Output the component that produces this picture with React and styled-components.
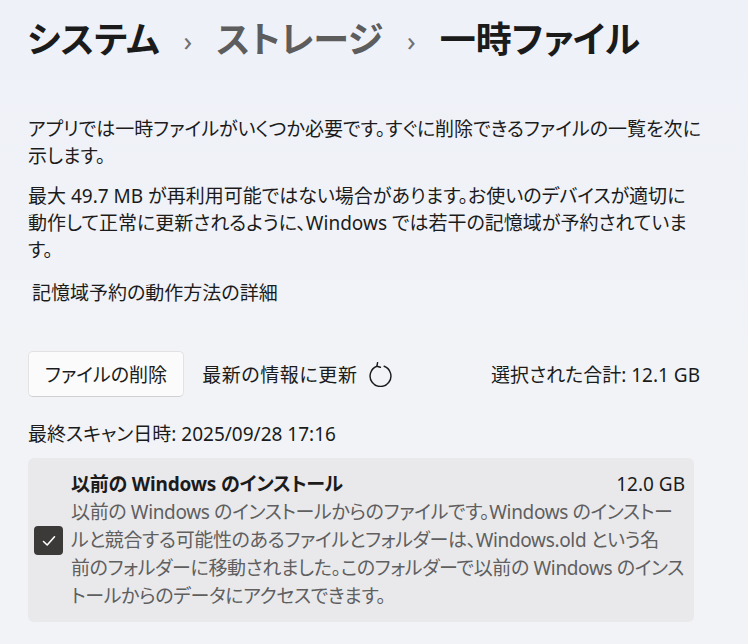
import React from "react";
import styled, { createGlobalStyle } from "styled-components";

const GlobalStyle = createGlobalStyle`
  html, body {
    margin: 0;
    padding: 0;
  }
  body {
    width: 748px;
    height: 644px;
    overflow: hidden;
    background: linear-gradient(180deg, #eef1f8 0%, #f1f3f7 55%, #f2f3f6 100%);
    font-family: "Noto Sans", "Noto Sans CJK JP", sans-serif;
    font-feature-settings: "palt";
    color: #1b1b1b;
  }
`;

const Page = styled.main`
  padding: 12px 0 0 28px;
  width: 672px;
`;

const Breadcrumb = styled.h1`
  display: flex;
  align-items: center;
  gap: 24px;
  margin: 0 0 48px -1px;
  font-size: 36px;
  font-weight: 600;
  line-height: 56px;
`;

const Crumb = styled.span`
  color: ${(p) => (p.$muted ? "#5d5d5d" : "#1b1b1b")};
`;

const Sep = styled.span`
  font-size: 28px;
  font-weight: 400;
  color: #707070;
`;

const Para = styled.p`
  margin: 0 0 13px;
  font-size: 19px;
  line-height: 27px;
  white-space: nowrap;
`;

const LinkText = styled.a`
  display: block;
  margin: 16px 0 0 4px;
  font-size: 19px;
  line-height: 27px;
  color: #1b1b1b;
  text-decoration: none;
`;

const Toolbar = styled.div`
  display: flex;
  align-items: center;
  margin-top: 44px;
`;

const Button = styled.button`
  height: 46px;
  padding: 0 16px;
  border: 1px solid #e2e2e4;
  border-bottom-color: #d0d0d3;
  border-radius: 5px;
  background: #fbfbfc;
  font-family: inherit;
  font-feature-settings: inherit;
  font-size: 19px;
  color: #1b1b1b;
`;

const Refresh = styled.button`
  display: flex;
  align-items: center;
  gap: 10px;
  margin-left: 18px;
  padding: 0;
  border: none;
  background: none;
  font-family: inherit;
  font-feature-settings: inherit;
  font-size: 19px;
  letter-spacing: 0.6px;
  color: #1b1b1b;
`;

const Total = styled.span`
  margin-left: auto;
  font-size: 19px;
`;

const ScanInfo = styled.div`
  margin-top: 24px;
  font-size: 19px;
  line-height: 27px;
`;

const Card = styled.div`
  display: grid;
  grid-template-columns: 30px 1fr auto;
  column-gap: 7px;
  align-items: center;
  margin-top: 10px;
  width: 666px;
  box-sizing: border-box;
  padding: 13px 9px 12px 6px;
  background: #e9e9ec;
  border-radius: 6px;
`;

const Check = styled.span`
  grid-row: 1 / span 2;
  width: 29px;
  height: 29px;
  border-radius: 4px;
  background: #3b3a39;
  display: flex;
  align-items: center;
  justify-content: center;
`;

const ItemTitle = styled.div`
  font-size: 19px;
  font-weight: 700;
  line-height: 27px;
  letter-spacing: -0.2px;
`;

const ItemSize = styled.div`
  font-size: 19px;
  line-height: 27px;
`;

const ItemDesc = styled.div`
  grid-column: 2 / span 2;
  font-size: 19px;
  line-height: 28px;
  letter-spacing: -0.35px;
  color: #5f5f5f;
  white-space: nowrap;
`;

export default function App() {
  return (
    <>
      <GlobalStyle />
      <Page>
        <Breadcrumb>
          <Crumb>システム</Crumb>
          <Sep>›</Sep>
          <Crumb $muted>ストレージ</Crumb>
          <Sep>›</Sep>
          <Crumb>一時ファイル</Crumb>
        </Breadcrumb>

        <Para>
          アプリでは一時ファイルがいくつか必要です。すぐに削除できるファイルの一覧を次に
          <br />
          示します。
        </Para>
        <Para>
          最大 49.7 MB が再利用可能ではない場合があります。お使いのデバイスが適切に
          <br />
          動作して正常に更新されるように、Windows では若干の記憶域が予約されていま
          <br />
          す。
        </Para>
        <LinkText href="#">記憶域予約の動作方法の詳細</LinkText>

        <Toolbar>
          <Button>ファイルの削除</Button>
          <Refresh>
            最新の情報に更新
            <svg width="25" height="25" viewBox="0 0 24 24" fill="none">
              <path
                d="M8.5 4.1A10 10 0 1 0 15.5 4.1"
                stroke="#1b1b1b"
                strokeWidth="1.4"
                strokeLinecap="round"
              />
              <path
                d="M9.2 0.6L8.5 4.1L11.9 5"
                stroke="#1b1b1b"
                strokeWidth="1.4"
                strokeLinecap="round"
                strokeLinejoin="round"
              />
            </svg>
          </Refresh>
          <Total>選択された合計: 12.1 GB</Total>
        </Toolbar>

        <ScanInfo>最終スキャン日時: 2025/09/28 17:16</ScanInfo>

        <Card>
          <Check>
            <svg width="18" height="18" viewBox="0 0 18 18" fill="none">
              <path
                d="M3.5 9.5L7.2 13L14.5 4.8"
                stroke="#ffffff"
                strokeWidth="1.6"
                strokeLinecap="round"
                strokeLinejoin="round"
              />
            </svg>
          </Check>
          <ItemTitle>以前の Windows のインストール</ItemTitle>
          <ItemSize>12.0 GB</ItemSize>
          <ItemDesc>
            以前の Windows のインストールからのファイルです。Windows のインストー
            <br />
            ルと競合する可能性のあるファイルとフォルダーは、Windows.old という名
            <br />
            前のフォルダーに移動されました。このフォルダーで以前の Windows のインス
            <br />
            トールからのデータにアクセスできます。
          </ItemDesc>
        </Card>
      </Page>
    </>
  );
}
